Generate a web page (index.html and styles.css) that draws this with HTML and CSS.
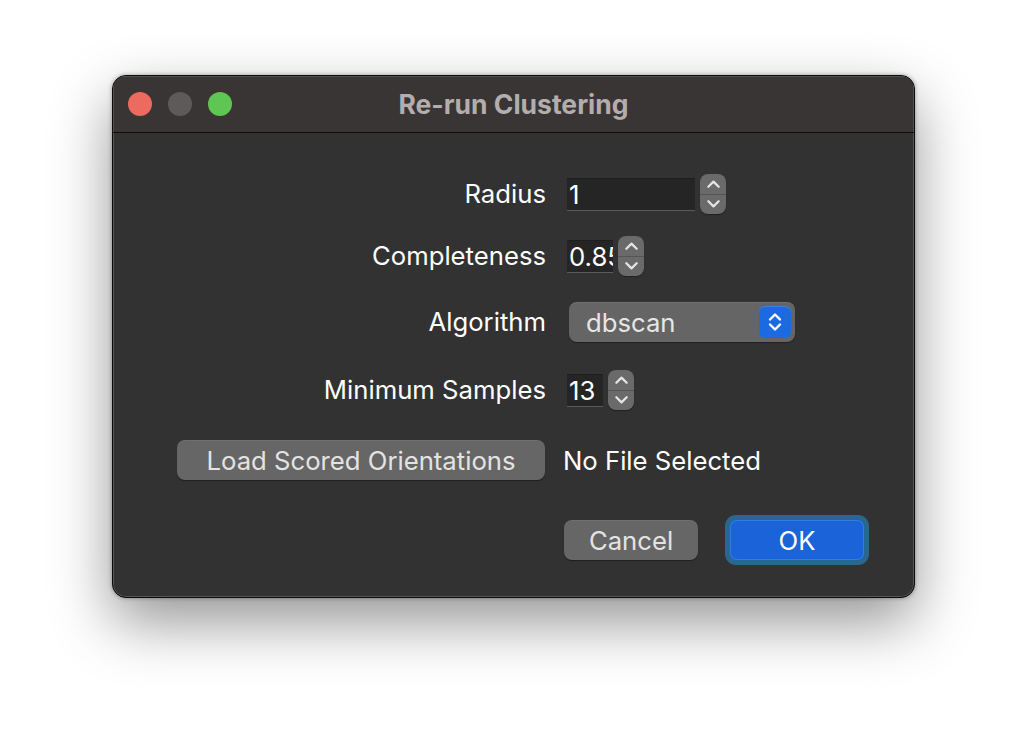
FILE: index.html
```html
<!DOCTYPE html>
<html>
<head>
<meta charset="utf-8">
<link rel="stylesheet" href="styles.css">
</head>
<body>
<div class="window">
  <div class="titlebar">
    <div class="lights">
      <span class="light red"></span>
      <span class="light gray"></span>
      <span class="light green"></span>
    </div>
    <div class="title">Re-run Clustering</div>
  </div>
  <div class="content">
    <div class="form">
      <div class="row r1">
        <div class="label">Radius</div>
        <div class="field">
          <div class="input w-radius">1</div>
          <div class="stepper">
            <span class="half"><svg viewBox="0 0 16 10" width="15" height="10"><path d="M2.5 8 L8 2.5 L13.5 8" fill="none" stroke="#e4e4e4" stroke-width="2.4" stroke-linecap="round" stroke-linejoin="round"/></svg></span>
            <span class="half lower"><svg viewBox="0 0 16 10" width="15" height="10"><path d="M2.5 2 L8 7.5 L13.5 2" fill="none" stroke="#e4e4e4" stroke-width="2.4" stroke-linecap="round" stroke-linejoin="round"/></svg></span>
          </div>
        </div>
      </div>
      <div class="row r2">
        <div class="label">Completeness</div>
        <div class="field">
          <div class="input w-comp">0.85</div>
          <div class="stepper">
            <span class="half"><svg viewBox="0 0 16 10" width="15" height="10"><path d="M2.5 8 L8 2.5 L13.5 8" fill="none" stroke="#e4e4e4" stroke-width="2.4" stroke-linecap="round" stroke-linejoin="round"/></svg></span>
            <span class="half lower"><svg viewBox="0 0 16 10" width="15" height="10"><path d="M2.5 2 L8 7.5 L13.5 2" fill="none" stroke="#e4e4e4" stroke-width="2.4" stroke-linecap="round" stroke-linejoin="round"/></svg></span>
          </div>
        </div>
      </div>
      <div class="row r3">
        <div class="label">Algorithm</div>
        <div class="field">
          <div class="popup">
            <span class="popup-text">dbscan</span>
            <span class="popup-btn"><svg viewBox="0 0 16 24" width="16" height="24"><path d="M3 9.5 L8 4.5 L13 9.5 M3 14.5 L8 19.5 L13 14.5" fill="none" stroke="#fff" stroke-width="2.4" stroke-linecap="round" stroke-linejoin="round"/></svg></span>
          </div>
        </div>
      </div>
      <div class="row r4">
        <div class="label">Minimum Samples</div>
        <div class="field">
          <div class="input w-min">13</div>
          <div class="stepper">
            <span class="half"><svg viewBox="0 0 16 10" width="15" height="10"><path d="M2.5 8 L8 2.5 L13.5 8" fill="none" stroke="#e4e4e4" stroke-width="2.4" stroke-linecap="round" stroke-linejoin="round"/></svg></span>
            <span class="half lower"><svg viewBox="0 0 16 10" width="15" height="10"><path d="M2.5 2 L8 7.5 L13.5 2" fill="none" stroke="#e4e4e4" stroke-width="2.4" stroke-linecap="round" stroke-linejoin="round"/></svg></span>
          </div>
        </div>
      </div>
      <div class="row r5">
        <div class="button load">Load Scored Orientations</div>
        <div class="field"><span class="file-text">No File Selected</span></div>
      </div>
    </div>
    <div class="actions">
      <div class="button cancel">Cancel</div>
      <div class="ok-ring"><div class="button ok">OK</div></div>
    </div>
  </div>
</div>
</body>
</html>
```

FILE: styles.css
```css
html, body {
  margin: 0;
  padding: 0;
  background: #ffffff;
  font-family: "Inter", "Liberation Sans", sans-serif;
}

body {
  padding: 75px 0 0 112px;
  height: 746px;
  box-sizing: border-box;
  overflow: hidden;
}

.window {
  width: 803px;
  height: 523px;
  box-sizing: border-box;
  border: 1px solid #0b0b0b;
  border-radius: 14px;
  background: #323232;
  overflow: hidden;
  box-shadow: inset 0 0 0 1px rgba(255,255,255,0.18), 0 24px 60px rgba(0,0,0,0.42), 0 0 4px rgba(0,0,0,0.35);
  display: flex;
  flex-direction: column;
}

.titlebar {
  height: 56px;
  flex: none;
  background: #3a3535;
  border-bottom: 1px solid #0e0e0e;
  display: flex;
  align-items: center;
  position: relative;
  box-shadow: inset 1px 1px 0 rgba(255,255,255,0.14), inset -1px 0 0 rgba(255,255,255,0.14);
}

.lights {
  display: flex;
  gap: 16px;
  padding-left: 15px;
}

.light {
  width: 24px;
  height: 24px;
  border-radius: 50%;
  display: block;
}
.red { background: #ec6a5e; }
.gray { background: #5e5a5a; }
.green { background: #5fc553; }

.title {
  position: absolute;
  left: 0;
  right: 0;
  top: 0;
  bottom: 0;
  display: flex;
  align-items: center;
  justify-content: center;
  color: #b3adad;
  font-weight: 700;
  font-size: 26.5px;
  pointer-events: none;
}

.content {
  flex: 1;
  display: flex;
  flex-direction: column;
  padding: 40px 45px 0 64px;
}

.form {
  display: flex;
  flex-direction: column;
}

.row {
  display: grid;
  grid-template-columns: 369px 1fr;
  column-gap: 19px;
  height: 40px;
  align-items: center;
}
.r2 { margin-top: 22px; }
.r3 { margin-top: 26px; }
.r4 { margin-top: 28px; }
.r5 { margin-top: 31px; }

.label {
  text-align: right;
  color: #ffffff;
  font-size: 25.7px;
  line-height: 42px;
}

.field {
  display: flex;
  align-items: center;
  height: 40px;
}

.input {
  height: 33px;
  box-sizing: border-box;
  background: #252525;
  border-top: 1px solid #1e1e1e;
  border-bottom: 1px solid #5a5a5a;
  color: #ffffff;
  font-size: 25.7px;
  line-height: 32px;
  padding-left: 2px;
  overflow: hidden;
  white-space: nowrap;
}
.w-radius { width: 128px; margin-left: 2px; }
.w-comp { width: 46px; margin-left: 2px; }
.w-min { width: 36px; margin-left: 2px; }

.stepper {
  width: 26px;
  height: 40px;
  margin-left: 5px;
  border-radius: 8px;
  background: #6a6a6a;
  display: flex;
  flex-direction: column;
  overflow: hidden;
  box-shadow: 0 1px 1px rgba(0,0,0,0.35);
}
.half {
  flex: 1;
  display: flex;
  align-items: center;
  justify-content: center;
}
.half.lower {
  border-top: 1px solid #555555;
}

.popup {
  width: 226px;
  height: 40px;
  margin-left: 4px;
  box-sizing: border-box;
  background: #656565;
  border-radius: 8px;
  display: flex;
  align-items: center;
  justify-content: space-between;
  padding: 0 4px 0 17px;
  box-shadow: 0 1px 1px rgba(0,0,0,0.35), inset 0 1px 0 rgba(255,255,255,0.08);
}
.popup-text {
  color: #e6e6e6;
  font-size: 25.7px;
}
.popup-btn {
  width: 32px;
  height: 32px;
  border-radius: 6px;
  background: #1c6ae2;
  display: flex;
  align-items: center;
  justify-content: center;
  box-shadow: inset 0 1px 0 rgba(255,255,255,0.15);
}

.button {
  height: 40px;
  box-sizing: border-box;
  border-radius: 8px;
  background: #666666;
  color: #e3e3e3;
  font-size: 25.7px;
  display: flex;
  align-items: center;
  justify-content: center;
  box-shadow: 0 1px 1px rgba(0,0,0,0.4), inset 0 1px 0 rgba(255,255,255,0.06);
}

.load {
  width: 368px;
}

.file-text {
  color: #ffffff;
  font-size: 25.7px;
  margin-left: -2px;
}

.actions {
  display: flex;
  justify-content: flex-end;
  align-items: center;
  gap: 27px;
  margin-top: 35px;
}

.cancel {
  width: 134px;
}

.ok-ring {
  padding: 5px;
  border-radius: 11px;
  background: #2a6790;
}

.ok {
  width: 134px;
  height: 40px;
  background: #1b63d8;
  color: #ffffff;
  border-radius: 7px;
  box-shadow: inset 0 0 0 1px #2c7fe8;
}
```
